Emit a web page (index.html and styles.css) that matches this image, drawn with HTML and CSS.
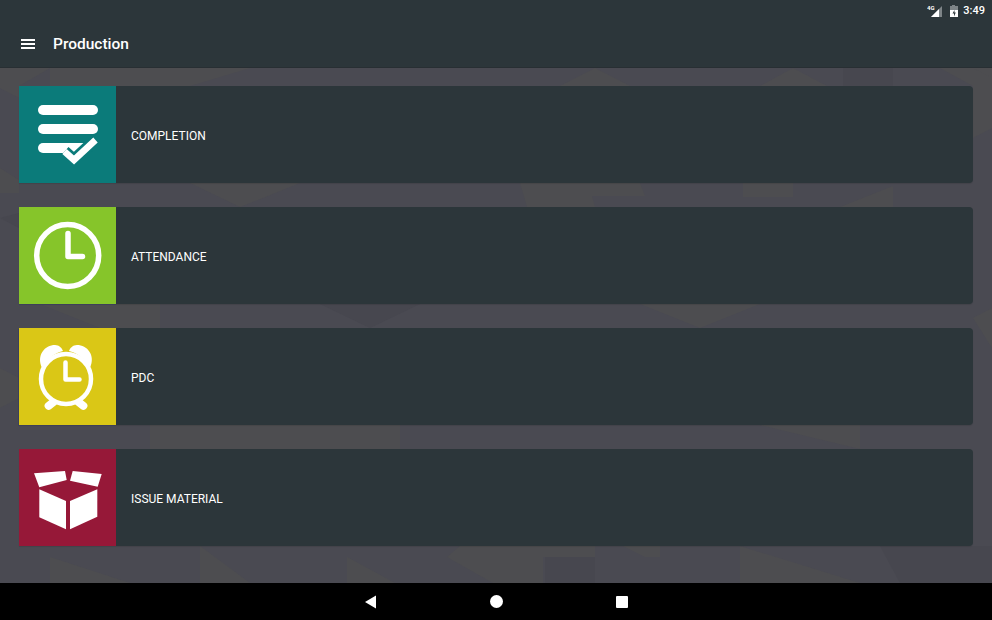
FILE: index.html
```html
<!DOCTYPE html>
<html lang="en">
<head>
  <meta charset="UTF-8" />
  <title>Production</title>
  <link rel="stylesheet" href="styles.css">
</head>
<body>
  <div class="screen">
    <header class="appbar">
      <div class="status">
        <svg class="status-signal" width="16" height="14" viewBox="0 0 16 14">
          <path fill="#7d8487" d="M15 2v11H4z"/>
          <path fill="#fff" d="M12 5v8H4z"/>
          <text x="0" y="5.500" font-size="6" font-weight="700" font-family="Roboto" fill="#fff">4G</text>
        </svg>
        <svg class="status-battery" width="10" height="14" viewBox="0 0 10 14">
          <path fill="#7d8487" d="M3 2V1h3v1h3v11H1V2z"/>
          <path fill="#fff" d="M1 6h8v7H1z"/>
          <path fill="#2c363a" d="M5.500 6 3.500 9.500h1.500V12.500L6.800 8.500H5.500z"/>
        </svg>
        <span class="status-time">3:49</span>
      </div>
      <div class="toolbar">
        <svg class="menu-icon" width="16" height="12" viewBox="0 0 16 12">
          <path fill="#fff" d="M1 1h14v2H1zM1 5h14v2H1zM1 9h14v2H1z"/>
        </svg>
        <h1>Production</h1>
      </div>
    </header>

    <main class="content">
      <svg class="pattern" width="992" height="515" viewBox="0 0 992 515">
        <g fill="#4d4d50">
          <!-- top strip -->
          <polygon points="0,0 50,0 19,18 0,18"/>
          <polygon points="50,0 250,0 190,18 50,18"/>
          <polygon points="560,18 595,0 630,18"/>
          <polygon points="760,18 793,0 827,18"/>
          <polygon points="940,0 992,0 992,18 973,18"/>
          <!-- strip under the first tile -->
          <polygon points="520,115 640,115 645,128 592,128 595,139 527,139"/>
          <polygon points="743,115 793,115 793,129 743,129"/>
          <polygon points="840,139 893,118 893,139"/>
          <polygon points="190,115 300,115 240,139"/>
          <!-- strip under the second tile -->
          <polygon points="40,236 160,236 160,260 100,260"/>
          <polygon points="640,236 760,236 700,260"/>
          <!-- strip under the third tile -->
          <polygon points="150,357 400,357 400,381 150,381"/>
          <polygon points="760,357 860,357 860,381"/>
          <!-- bottom strip -->
          <polygon points="347,489 395,515 347,515"/>
          <polygon points="447,489 460,478 595,478 595,489 543,489 543,515 493,515"/>
          <polygon points="623,478 660,478 660,489 645,489"/>
          <polygon points="50,489 130,515 50,515"/>
          <polygon points="200,478 250,515 200,515"/>
          <polygon points="740,478 860,515 740,515"/>
          <!-- left and right edges -->
          <polygon points="0,0 19,0 19,30 0,20"/>
          <polygon points="0,100 19,112 19,125 0,125"/>
          <polygon points="0,300 19,310 19,330 0,340"/>
          <polygon points="973,0 992,10 992,60 973,70"/>
          <polygon points="973,250 992,240 992,280"/>
        </g>
        <g fill="#47474f">
          <polygon points="843,0 893,0 893,18 843,18"/>
          <polygon points="545,489 595,489 595,515 545,515"/>
          <polygon points="0,150 19,145 19,160"/>
          <polygon points="320,236 420,236 370,260"/>
          <polygon points="880,478 992,478 992,515 900,515"/>
        </g>
      </svg>

      <a class="tile">
        <span class="tile-icon tile-teal">
          <svg width="97" height="97" viewBox="0 0 97 97">
            <g fill="#fff">
              <rect x="19" y="19" width="60" height="10" rx="5"/>
              <rect x="19" y="38" width="60" height="10" rx="5"/>
              <rect x="19" y="57" width="50" height="10" rx="5"/>
            </g>
            <path d="M45.500 65.500 55 74 76.500 54" fill="none" stroke="#0b7b7a" stroke-width="12"/>
            <path d="M45.500 65.500 55 74 76.500 54" fill="none" stroke="#fff" stroke-width="6.500"/>
          </svg>
        </span>
        <span class="tile-label">COMPLETION</span>
      </a>

      <a class="tile">
        <span class="tile-icon tile-green">
          <svg width="97" height="97" viewBox="0 0 97 97">
            <circle cx="48.700" cy="48.500" r="31" fill="none" stroke="#fff" stroke-width="5.500"/>
            <path d="M49 26.500v23h14.500" fill="none" stroke="#fff" stroke-width="5.500" stroke-linecap="round" stroke-linejoin="round"/>
          </svg>
        </span>
        <span class="tile-label">ATTENDANCE</span>
      </a>

      <a class="tile">
        <span class="tile-icon tile-yellow">
          <svg width="97" height="97" viewBox="0 0 97 97">
            <g fill="#fff">
              <path d="M23 40C17 27 26 17 36 17c4 0 7 3 8 6-9 2-16 8-21 17z"/>
              <path d="M71 40c6-13-3-23-13-23-4 0-7 3-8 6 9 2 16 8 21 17z"/>
              <rect x="25" y="72" width="14" height="8" rx="4" transform="rotate(-38 32 76)"/>
              <rect x="55" y="72" width="14" height="8" rx="4" transform="rotate(38 62 76)"/>
            </g>
            <circle cx="47" cy="51" r="25" fill="#dac716" stroke="#fff" stroke-width="4.500"/>
            <path d="M46.500 34.500v17h14" fill="none" stroke="#fff" stroke-width="4.500" stroke-linecap="round" stroke-linejoin="round"/>
          </svg>
        </span>
        <span class="tile-label">PDC</span>
      </a>

      <a class="tile">
        <span class="tile-icon tile-red">
          <svg width="97" height="97" viewBox="0 0 97 97">
            <g fill="#fff">
              <path d="M15 24.300 46 22l1.700 9-27.400 7.300z"/>
              <path d="M53.700 22l29 3-4 12.700L51 31.700z"/>
              <path d="M20.300 40.300 47 52v28.300L20.300 68.300z"/>
              <path d="M51 52l27.300-11.700v27.400L51 80.300z"/>
            </g>
          </svg>
        </span>
        <span class="tile-label">ISSUE MATERIAL</span>
      </a>
    </main>

    <nav class="navbar">
      <svg width="14" height="14" viewBox="0 0 14 14"><path fill="#fff" d="M12 .5v13L1 7z"/></svg>
      <span class="nav-home"></span>
      <span class="nav-recent"></span>
    </nav>
  </div>
</body>
</html>
```

FILE: styles.css
```css
* { box-sizing: border-box; margin: 0; padding: 0; }
html, body { height: 100%; }
body {
  background: #4a4a52;
  color: #fff;
  font-family: 'Roboto', sans-serif;
  overflow: hidden;
}
.screen {
  display: flex;
  flex-direction: column;
  height: 620px;
}
.appbar {
  background: #2c363a;
  height: 68px;
  flex: none;
  border-bottom: 1px solid #282f33;
}
.status {
  height: 24px;
  display: flex;
  align-items: center;
  justify-content: flex-end;
  padding: 0 7px 3px 0;
}
.status-signal { margin-right: 6px; }
.status-battery { margin-right: 4px; }
.status-time {
  font-size: 11px;
  font-weight: 500;
  color: #fff;
}
.toolbar {
  display: flex;
  align-items: center;
  height: 40px;
  padding-left: 20px;
}
.menu-icon { margin-right: 17px; }
.toolbar h1 {
  font-size: 15.500px;
  font-weight: 500;
  color: #fff;
}
.content {
  flex: 1;
  position: relative;
  display: flex;
  flex-direction: column;
  gap: 24px;
  padding: 18px 19px 0;
}
.pattern {
  position: absolute;
  left: 0;
  top: 0;
}
.tile {
  position: relative;
  display: flex;
  align-items: center;
  height: 97px;
  background: #2c363a;
  border-radius: 0 4px 4px 0;
  box-shadow: 0 1px 1px rgba(0,0,0,0.1);
}
.tile-icon {
  width: 97px;
  height: 97px;
  flex: none;
  display: block;
}
.tile-icon svg { display: block; }
.tile-teal { background: #0b7b7a; }
.tile-green { background: #86c52a; box-shadow: 0 1px 0 #3d4058; }
.tile-yellow { background: #dac716; box-shadow: -1px 1px 0 #3d4058; }
.tile-red { background: #961838; }
.tile-label {
  margin-left: 15px;
  padding-top: 2px;
  font-size: 12px;
  font-weight: 400;
  color: #fff;
}
.navbar {
  height: 37px;
  flex: none;
  background: #000;
  display: flex;
  align-items: center;
  padding-left: 364px;
}
.nav-home {
  width: 13px;
  height: 13px;
  margin-left: 112px;
  background: #fff;
  border-radius: 50%;
}
.nav-recent {
  width: 12px;
  height: 12px;
  margin-left: 113px;
  background: #fff;
  border-radius: 1px;
}
```
